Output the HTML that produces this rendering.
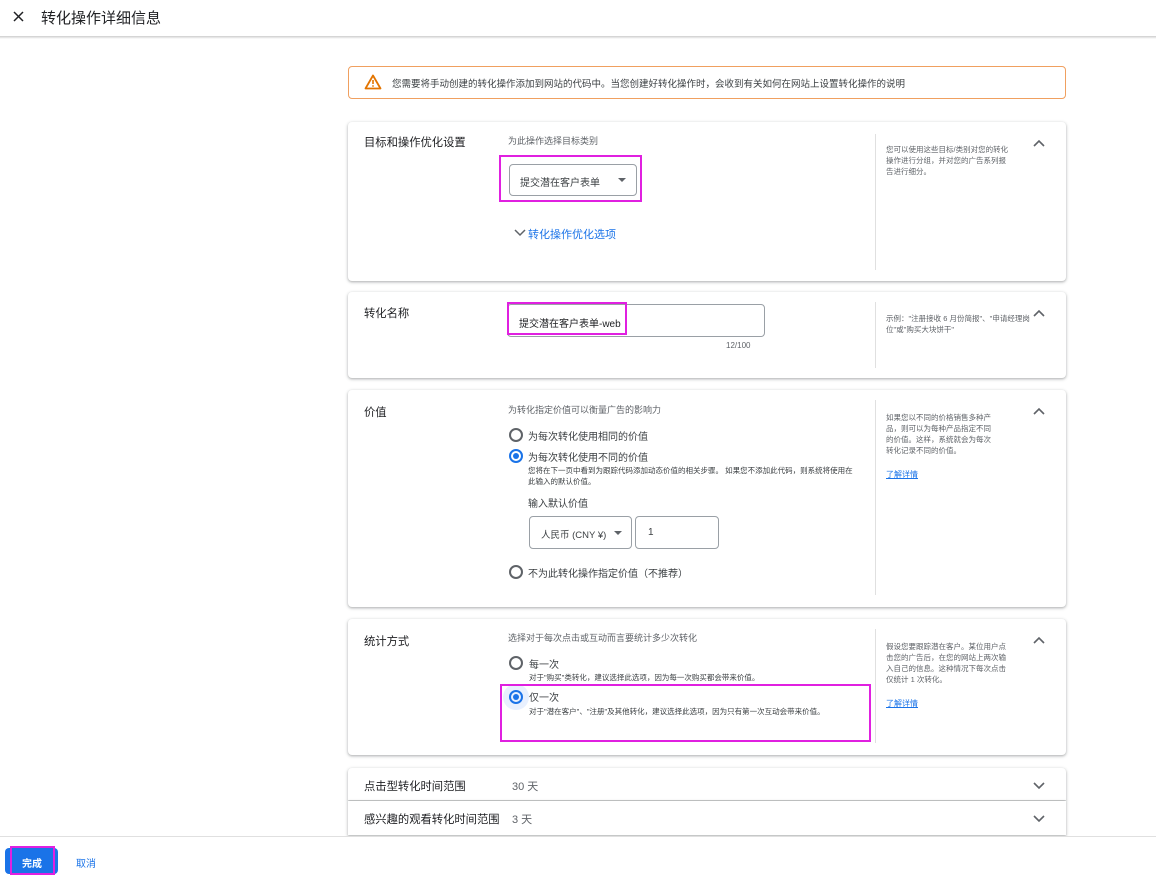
<!DOCTYPE html>
<html><head><meta charset="utf-8"><style>
*{margin:0;padding:0;box-sizing:border-box}
body{width:1156px;height:879px;background:#fff;font-family:"Liberation Sans","Noto Sans CJK SC",sans-serif;color:#3c4043;position:relative;overflow:hidden}
.a{position:absolute}
.card{position:absolute;left:348px;width:718px;background:#fff;border-radius:4px;box-shadow:0 1px 2px rgba(60,64,67,.3),0 1px 3px 1px rgba(60,64,67,.12)}
.lbl{position:absolute;left:16px;font-size:11.3px;color:#202124}
.div{position:absolute;left:527px;width:1px;background:#e0e0e0}
.help{position:absolute;left:538px;width:125px;font-size:7.5px;line-height:11px;color:#5f6368}
.chev{position:absolute;left:684px;width:14px;height:14px}
.sub{font-size:9px;color:#5f6368}
.radio{position:absolute;width:14px;height:14px;border:2px solid #5f6368;border-radius:50%}
.radio.on{border-color:#1a73e8}
.radio.on::after{content:"";position:absolute;left:2px;top:2px;width:6px;height:6px;border-radius:50%;background:#1a73e8}
.mag{position:absolute;border:2px solid #e020e0}
.link{color:#1a73e8;text-decoration:underline;font-size:8px}
</style></head><body>
<svg class="a" style="left:13px;top:11px" width="11" height="11"><path d="M1 1l9 9M10 1l-9 9" stroke="#202124" stroke-width="1.5"/></svg>
<div class="a" style="left:41px;top:7px;font-size:15px;color:#202124">转化操作详细信息</div>
<div class="a" style="left:0;top:36px;width:1156px;height:3px;background:linear-gradient(#ccc,#fff)"></div>

<div class="a" style="left:348px;top:66px;width:718px;height:33px;border:1px solid #f0a060;border-radius:4px"></div>
<svg class="a" style="left:364px;top:74px" width="18" height="16" viewBox="0 0 18 16"><path d="M9 1.5L16.5 14.5H1.5Z" fill="none" stroke="#e37400" stroke-width="1.8" stroke-linejoin="round"/><path d="M9 6v4" stroke="#e37400" stroke-width="1.6"/><circle cx="9" cy="12" r="0.9" fill="#e37400"/></svg>
<div class="a" style="left:392px;top:76px;font-size:9.5px;color:#3c4043">您需要将手动创建的转化操作添加到网站的代码中。当您创建好转化操作时，会收到有关如何在网站上设置转化操作的说明</div>

<!-- card1 -->
<div class="card" style="top:122px;height:159px">
 <div class="lbl" style="top:12px">目标和操作优化设置</div>
 <div class="a sub" style="left:160px;top:12px">为此操作选择目标类别</div>
 <div class="a" style="left:161px;top:42px;width:128px;height:32px;border:1px solid #9aa0a6;border-radius:4px"></div>
 <div class="a" style="left:172px;top:52px;font-size:10px;color:#3c4043">提交潜在客户表单</div>
 <div class="a" style="left:270px;top:56px;width:0;height:0;border-left:4px solid transparent;border-right:4px solid transparent;border-top:4px solid #5f6368"></div>
 <div class="mag" style="left:151px;top:33px;width:143px;height:47px"></div>
 <svg class="a" style="left:166px;top:107px" width="12" height="8"><path d="M1 1l5 5 5-5" fill="none" stroke="#5f6368" stroke-width="1.5"/></svg>
 <div class="a" style="left:180px;top:104px;font-size:11px;color:#1a73e8">转化操作优化选项</div>
 <div class="div" style="top:12px;height:136px"></div>
 <div class="help" style="top:22px">您可以使用这些目标/类别对您的转化操作进行分组，并对您的广告系列报告进行细分。</div>
 <svg class="chev" style="top:14px" viewBox="0 0 14 14"><path d="M2 10l5-5 5 5" fill="none" stroke="#5f6368" stroke-width="1.6"/></svg>
</div>

<!-- card2 -->
<div class="card" style="top:292px;height:86px">
 <div class="lbl" style="top:13px">转化名称</div>
 <div class="a" style="left:159px;top:12px;width:258px;height:33px;border:1px solid #9aa0a6;border-radius:4px"></div>
 <div class="a" style="left:171px;top:23px;font-size:10px;color:#202124">提交潜在客户表单-web</div>
 <div class="mag" style="left:159px;top:10px;width:120px;height:33px"></div>
 <div class="a" style="left:378px;top:49px;font-size:8px;color:#5f6368">12/100</div>
 <div class="div" style="top:10px;height:66px"></div>
 <div class="help" style="top:21px;width:150px">示例："注册接收 6 月份简报"、"申请经理岗位"或"购买大块饼干"</div>
 <svg class="chev" style="top:14px" viewBox="0 0 14 14"><path d="M2 10l5-5 5 5" fill="none" stroke="#5f6368" stroke-width="1.6"/></svg>
</div>

<!-- card3 -->
<div class="card" style="top:390px;height:217px">
 <div class="lbl" style="top:14px">价值</div>
 <div class="a sub" style="left:160px;top:13px">为转化指定价值可以衡量广告的影响力</div>
 <div class="radio" style="left:161px;top:38px"></div>
 <div class="a" style="left:180px;top:38px;font-size:10px">为每次转化使用相同的价值</div>
 <div class="radio on" style="left:161px;top:59px"></div>
 <div class="a" style="left:180px;top:59px;font-size:10px">为每次转化使用不同的价值</div>
 <div class="a" style="left:180px;top:75px;font-size:7.5px;line-height:11px;width:330px">您将在下一页中看到为跟踪代码添加动态价值的相关步骤。 如果您不添加此代码，则系统将使用在此输入的默认价值。</div>
 <div class="a" style="left:180px;top:105px;font-size:10px">输入默认价值</div>
 <div class="a" style="left:181px;top:126px;width:103px;height:33px;border:1px solid #9aa0a6;border-radius:4px"></div>
 <div class="a" style="left:193px;top:137px;font-size:9.5px">人民币 (CNY ¥)</div>
 <div class="a" style="left:266px;top:141px;border-left:4px solid transparent;border-right:4px solid transparent;border-top:4px solid #5f6368"></div>
 <div class="a" style="left:287px;top:126px;width:84px;height:33px;border:1px solid #9aa0a6;border-radius:4px"></div>
 <div class="a" style="left:300px;top:137px;font-size:10px">1</div>
 <div class="radio" style="left:161px;top:175px"></div>
 <div class="a" style="left:180px;top:175px;font-size:10px">不为此转化操作指定价值（不推荐）</div>
 <div class="div" style="top:10px;height:195px"></div>
 <div class="help" style="top:22px;width:105px">如果您以不同的价格销售多种产品，则可以为每种产品指定不同的价值。这样，系统就会为每次转化记录不同的价值。</div>
 <div class="a link" style="left:538px;top:79px">了解详情</div>
 <svg class="chev" style="top:14px" viewBox="0 0 14 14"><path d="M2 10l5-5 5 5" fill="none" stroke="#5f6368" stroke-width="1.6"/></svg>
</div>

<!-- card4 -->
<div class="card" style="top:619px;height:136px">
 <div class="lbl" style="top:14px">统计方式</div>
 <div class="a sub" style="left:160px;top:12px">选择对于每次点击或互动而言要统计多少次转化</div>
 <div class="radio" style="left:161px;top:37px"></div>
 <div class="a" style="left:181px;top:37px;font-size:10px">每一次</div>
 <div class="a" style="left:181px;top:53px;font-size:7.5px">对于"购买"类转化，建议选择此选项，因为每一次购买都会带来价值。</div>
 <div class="a" style="left:155px;top:65px;width:26px;height:26px;border-radius:50%;background:#e8f0fe"></div>
 <div class="radio on" style="left:161px;top:71px"></div>
 <div class="a" style="left:181px;top:70px;font-size:10px">仅一次</div>
 <div class="a" style="left:181px;top:87px;font-size:7.5px;line-height:11px;width:300px">对于"潜在客户"、"注册"及其他转化，建议选择此选项，因为只有第一次互动会带来价值。</div>
 <div class="mag" style="left:152px;top:65px;width:371px;height:58px"></div>
 <div class="div" style="top:10px;height:114px"></div>
 <div class="help" style="top:22px;width:125px">假设您要跟踪潜在客户。某位用户点击您的广告后，在您的网站上两次输入自己的信息。这种情况下每次点击仅统计 1 次转化。</div>
 <div class="a link" style="left:538px;top:79px">了解详情</div>
 <svg class="chev" style="top:14px" viewBox="0 0 14 14"><path d="M2 10l5-5 5 5" fill="none" stroke="#5f6368" stroke-width="1.6"/></svg>
</div>

<div class="card" style="top:768px;height:32px;border-radius:4px 4px 0 0">
 <div class="lbl" style="top:10px">点击型转化时间范围</div>
 <div class="a" style="left:164px;top:10px;font-size:11px;color:#5f6368">30 天</div>
 <svg class="chev" style="top:10px" viewBox="0 0 14 14"><path d="M2 5l5 5 5-5" fill="none" stroke="#5f6368" stroke-width="1.6"/></svg>
</div>
<div class="card" style="top:801px;height:34px;border-radius:0">
 <div class="lbl" style="top:10px">感兴趣的观看转化时间范围</div>
 <div class="a" style="left:164px;top:10px;font-size:11px;color:#5f6368">3 天</div>
 <svg class="chev" style="top:10px" viewBox="0 0 14 14"><path d="M2 5l5 5 5-5" fill="none" stroke="#5f6368" stroke-width="1.6"/></svg>
</div>

<div class="a" style="left:0;top:836px;width:1156px;height:43px;background:#fff;border-top:1px solid #e0e0e0"></div>
<div class="a" style="left:5px;top:848px;width:53px;height:26px;background:#1a73e8;border-radius:4px"></div>
<div class="mag" style="left:10px;top:846px;width:45px;height:29px"></div>
<div class="a" style="left:22px;top:855px;font-size:10px;color:#fff;font-weight:bold">完成</div>
<div class="a" style="left:76px;top:855px;font-size:10px;color:#1a73e8">取消</div>
</body></html>
